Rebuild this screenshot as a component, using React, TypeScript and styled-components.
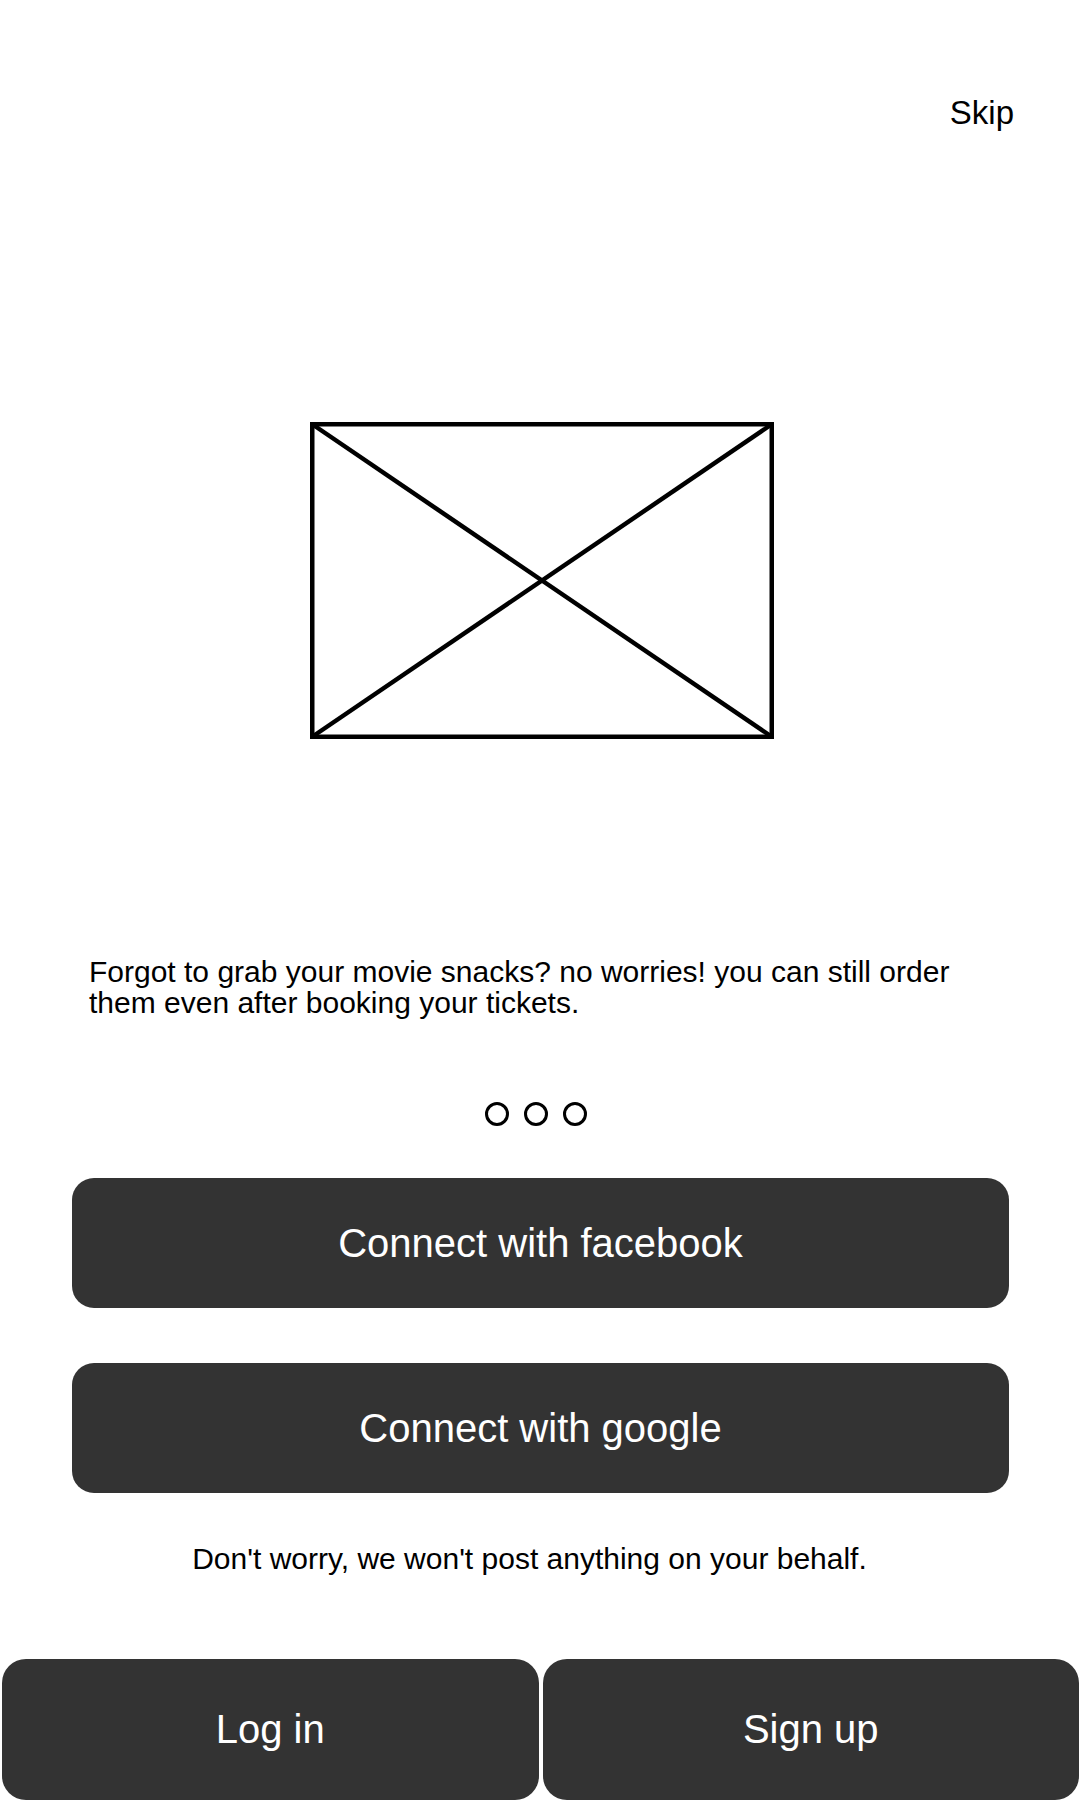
import React from "react";
import styled, { createGlobalStyle } from "styled-components";

const GlobalStyle = createGlobalStyle`
  html, body {
    margin: 0;
    padding: 0;
    background: #ffffff;
  }
  body {
    font-family: "Liberation Sans", Arial, sans-serif;
    color: #000000;
  }
  * { box-sizing: border-box; }
`;

const Screen = styled.div`
  width: 1080px;
  height: 1800px;
  display: flex;
  flex-direction: column;
  background: #ffffff;
  overflow: hidden;
`;

const Header = styled.header`
  display: flex;
  justify-content: flex-end;
  padding: 94px 66px 0 0;
`;

const SkipButton = styled.button`
  background: none;
  border: none;
  padding: 0;
  font-family: "Liberation Sans", Arial, sans-serif;
  font-size: 33px;
  line-height: normal;
  color: #000000;
  cursor: pointer;
`;

const Hero = styled.div`
  display: flex;
  justify-content: center;
  padding-left: 3px;
  margin-top: 290px;
`;

const Caption = styled.p`
  margin: 217px 0 0 0;
  padding: 0 89px;
  font-size: 30px;
  line-height: 31px;
`;

const Dots = styled.div`
  display: flex;
  justify-content: center;
  gap: 15px;
  margin-top: 84px;
  padding-right: 9px;
`;

const Dot = styled.span<{ $active?: boolean }>`
  width: 24px;
  height: 24px;
  border-radius: 50%;
  border: 3px solid #000000;
  background: ${(p) => (p.$active ? "#000000" : "transparent")};
`;

const SocialStack = styled.div`
  display: flex;
  flex-direction: column;
  gap: 55px;
  margin-top: 52px;
  padding: 0 71px 0 72px;
`;

const DarkButton = styled.button<{ $height: number; $radius: number }>`
  width: 100%;
  height: ${(p) => p.$height}px;
  border: none;
  border-radius: ${(p) => p.$radius}px;
  background: #333333;
  color: #ffffff;
  font-family: "Liberation Sans", Arial, sans-serif;
  font-size: 40px;
  display: flex;
  align-items: center;
  justify-content: center;
  cursor: pointer;
`;

const Disclaimer = styled.p`
  margin: 49px 0 0 0;
  padding-right: 21px;
  text-align: center;
  font-size: 30px;
  line-height: normal;
`;

const AuthRow = styled.div`
  display: grid;
  grid-template-columns: 1fr 1fr;
  gap: 4px;
  margin-top: auto;
  padding: 0 1px 0 2px;
`;

const Placeholder: React.FC = () => (
  <svg width="464" height="317" viewBox="0 0 464 317">
    <g stroke="#000" strokeWidth="4.5" fill="none">
      <rect x="2.25" y="2.25" width="459.5" height="312.5" />
      <line x1="2.25" y1="2.25" x2="461.75" y2="314.75" />
      <line x1="461.75" y1="2.25" x2="2.25" y2="314.75" />
    </g>
  </svg>
);

export default function App() {
  return (
    <>
      <GlobalStyle />
      <Screen>
        <Header>
          <SkipButton>Skip</SkipButton>
        </Header>
        <Hero>
          <Placeholder />
        </Hero>
        <Caption>
          Forgot to grab your movie snacks? no worries! you can still order
          them even after booking your tickets.
        </Caption>
        <Dots>
          <Dot />
          <Dot />
          <Dot />
        </Dots>
        <SocialStack>
          <DarkButton $height={130} $radius={22}>Connect with facebook</DarkButton>
          <DarkButton $height={130} $radius={22}>Connect with google</DarkButton>
        </SocialStack>
        <Disclaimer>Don't worry, we won't post anything on your behalf.</Disclaimer>
        <AuthRow>
          <DarkButton $height={141} $radius={24}>Log in</DarkButton>
          <DarkButton $height={141} $radius={24}>Sign up</DarkButton>
        </AuthRow>
      </Screen>
    </>
  );
}
